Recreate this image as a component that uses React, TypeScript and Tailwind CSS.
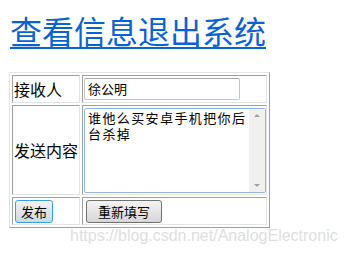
import React from 'react';

const cjk = { fontFamily: '"Noto Sans CJK SC", "Liberation Sans", sans-serif' };

const App: React.FC = () => {
    return (
        <div className="w-[346px] h-[253px] bg-white overflow-hidden" style={cjk}>
            {/* title link */}
            <div className="pl-[10px] pt-[8px] h-[72px]">
                <a href="#" className="text-[32px] leading-[44px] text-[#0a62d0] underline decoration-[1.5px] underline-offset-[3px]">查看信息退出系统</a>
            </div>

            {/* form table */}
            <div className="ml-[9px] w-[261px] border border-t-[#e3e3e3] border-l-[#e3e3e3] border-r-[#a0a0a0] border-b-[#a0a0a0] p-[2px] grid grid-cols-[68px_185px] grid-rows-[28px_90px_28px] gap-[2px]">
                <div className="border border-t-[#a0a0a0] border-l-[#a0a0a0] border-r-[#e3e3e3] border-b-[#e3e3e3] flex items-center pl-[1px] text-[16px] text-black">接收人</div>
                <div className="border border-t-[#a0a0a0] border-l-[#a0a0a0] border-r-[#e3e3e3] border-b-[#e3e3e3] flex items-center pl-[1px]">
                    <div className="w-[156px] h-[22px] border border-[#c5c5c5] border-t-[#a8a8a8] rounded-[2px] flex items-center pl-[3px] text-[13px] text-black">徐公明</div>
                </div>

                <div className="border border-t-[#a0a0a0] border-l-[#a0a0a0] border-r-[#e3e3e3] border-b-[#e3e3e3] flex items-center pl-[1px] text-[16px] text-black">发送内容</div>
                <div className="border border-t-[#a0a0a0] border-l-[#a0a0a0] border-r-[#e3e3e3] border-b-[#e3e3e3] pl-[1px] pt-[2px]">
                    <div className="w-[182px] h-[85px] border border-[#8fb7e0] rounded-[2px] flex">
                        <div className="flex-1 pl-[3px] pt-[1px] text-[13px] leading-[16px] tracking-[1.4px] text-black">谁他么买安卓手机把你后台杀掉</div>
                        <div className="w-[16px] bg-[#f0f0f0] flex flex-col justify-between items-center py-[5px]">
                            <div className="w-0 h-0 border-l-[3px] border-r-[3px] border-b-[3px] border-l-transparent border-r-transparent border-b-[#a0a0a0]" />
                            <div className="w-0 h-0 border-l-[3px] border-r-[3px] border-t-[3px] border-l-transparent border-r-transparent border-t-[#a0a0a0]" />
                        </div>
                    </div>
                </div>

                <div className="border border-t-[#a0a0a0] border-l-[#a0a0a0] border-r-[#e3e3e3] border-b-[#e3e3e3] flex items-center pl-[2px]">
                    <button className="w-[38px] h-[23px] border border-[#3a9fe0] rounded-[3px] bg-gradient-to-b from-[#f2f2f2] to-[#cfd8df] text-[13px] leading-none text-black">发布</button>
                </div>
                <div className="border border-t-[#a0a0a0] border-l-[#a0a0a0] border-r-[#e3e3e3] border-b-[#e3e3e3] flex items-center pl-[3px]">
                    <button className="w-[76px] h-[23px] border border-[#707070] rounded-[3px] bg-gradient-to-b from-[#f4f4f4] to-[#d6d6d6] text-[13px] leading-none text-black">重新填写</button>
                </div>
            </div>

            {/* watermark */}
            <div className="pl-[70px] -mt-[1px] text-[16px] leading-[18px] text-[#dedede]" style={{ fontFamily: '"Liberation Sans", Arial, sans-serif' }}>https://blog.csdn.net/AnalogElectronic</div>
        </div>
    );
};

export default App;
